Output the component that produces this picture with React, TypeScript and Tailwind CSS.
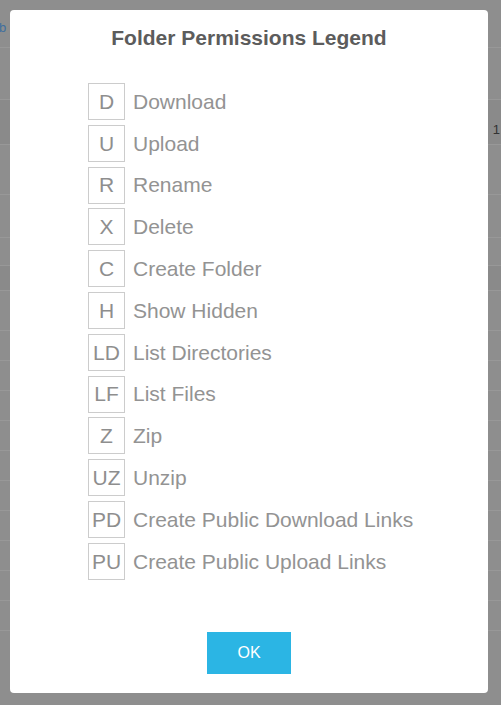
import React from 'react'

const perms = [
  { code: 'D', label: 'Download' },
  { code: 'U', label: 'Upload' },
  { code: 'R', label: 'Rename' },
  { code: 'X', label: 'Delete' },
  { code: 'C', label: 'Create Folder' },
  { code: 'H', label: 'Show Hidden' },
  { code: 'LD', label: 'List Directories' },
  { code: 'LF', label: 'List Files' },
  { code: 'Z', label: 'Zip' },
  { code: 'UZ', label: 'Unzip' },
  { code: 'PD', label: 'Create Public Download Links' },
  { code: 'PU', label: 'Create Public Upload Links' },
]

// faint table rows showing through the dimmed backdrop
const bgRows = [48, 52, 45, 50, 43, 28, 25, 40, 30, 30, 30, 30, 30, 30, 30, 30, 30, 30]

export default function App() {
  return (
    <div
      className="relative w-[501px] h-[705px] overflow-hidden bg-[#8e8e8e]"
      style={{ fontFamily: '"Liberation Sans", Arial, sans-serif' }}
    >
      <div className="flex flex-col">
        {bgRows.map((h, i) => (
          <div
            key={i}
            className={`border-b border-[#989898] ${i === 2 || i === 6 ? 'bg-[#8a8a8a]' : ''}`}
            style={{ height: h }}
          >
            {i === 0 && <span className="block pt-[18px] text-[13px] text-[#3f6f9f] -ml-[1px]">b</span>}
            {i === 2 && <span className="block text-right pt-[20px] pr-[1px] text-[13px] text-[#333]">1</span>}
          </div>
        ))}
      </div>

      <div className="absolute left-[10px] top-[10px] w-[478px] h-[683px] rounded-[4px] bg-white flex flex-col items-center">
        <h2 className="mt-[15px] text-[21px] leading-[26px] font-bold text-[#5c5c5c]">
          Folder Permissions Legend
        </h2>
        <div className="self-start ml-[78px] mt-[32px] flex flex-col gap-[4.8px]">
          {perms.map((p) => (
            <div key={p.code} className="flex items-center gap-[8px]">
              <div className="w-[37px] h-[37px] border border-[#cccccc] flex items-center justify-center text-[21px] text-[#8e8e8e]">
                {p.code}
              </div>
              <span className="text-[21px] text-[#939393]">{p.label}</span>
            </div>
          ))}
        </div>
        <button className="mt-[52px] w-[84px] h-[42px] bg-[#2bb5e4] text-white text-[16px]">
          OK
        </button>
      </div>
    </div>
  )
}
